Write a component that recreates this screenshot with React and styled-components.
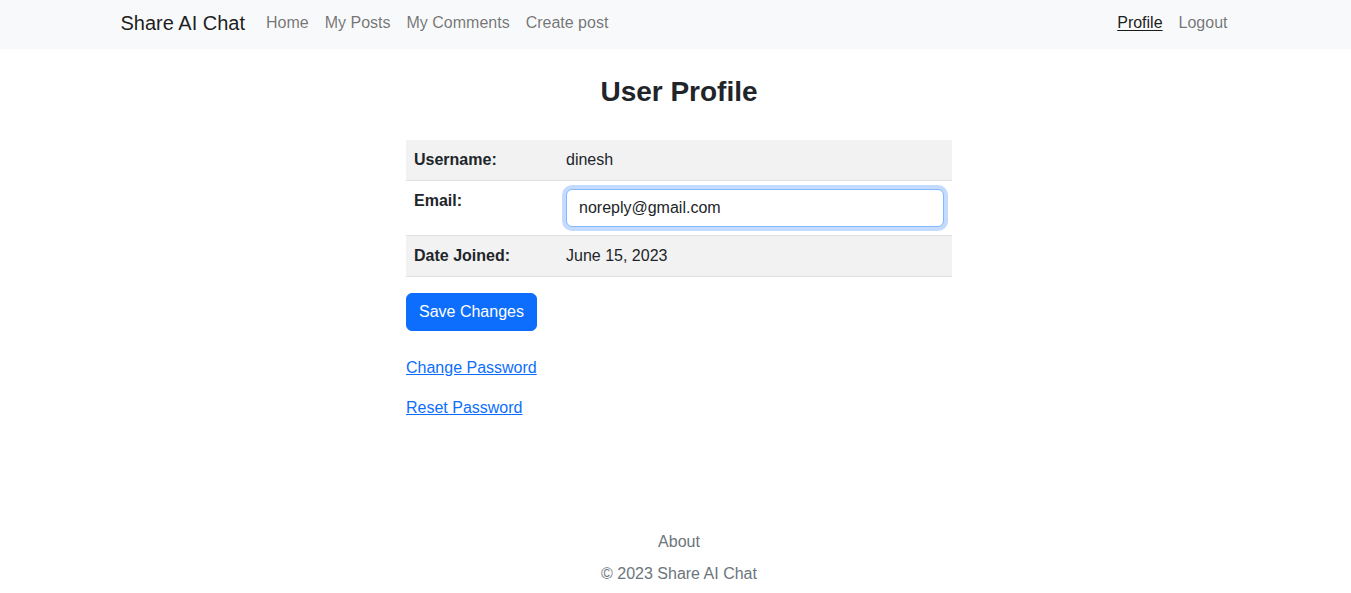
import React from 'react'
import styled, { createGlobalStyle } from 'styled-components'

const GlobalStyle = createGlobalStyle`
  * { box-sizing: border-box; }
  body {
    margin: 0;
    font-family: "Liberation Sans", Arial, sans-serif;
    font-size: 16px;
    line-height: 1.5;
    color: #212529;
    background: #fff;
  }
`

const Page = styled.div`
  min-height: 100vh;
  display: flex;
  flex-direction: column;
`

const Navbar = styled.nav`
  background: #f8f9fa;
  height: 49px;
  padding-bottom: 4px;
  display: flex;
  align-items: center;
`

const NavContainer = styled.div`
  width: 1140px;
  margin: 0 auto;
  padding: 0 10px 0 15px;
  display: flex;
  align-items: center;
`

const Brand = styled.a`
  font-size: 20px;
  color: rgba(0, 0, 0, 0.9);
  text-decoration: none;
  margin-right: 13px;
  line-height: 30px;
`

const NavList = styled.div`
  display: flex;
  align-items: center;
  margin-left: ${(p) => (p.$right ? 'auto' : '0')};
`

const NavLink = styled.a`
  padding: 8px 8px;
  color: ${(p) => (p.$active ? 'rgba(0, 0, 0, 0.9)' : 'rgba(0, 0, 0, 0.55)')};
  text-decoration: ${(p) => (p.$active ? 'underline' : 'none')};
  text-underline-offset: 2px;
`

const Main = styled.main`
  width: 553px;
  margin: 0 auto;
  padding: 26px 0 0 7px;
`

const Title = styled.h3`
  margin: 0 0 31px;
  text-align: center;
  font-size: 28px;
  font-weight: 700;
  line-height: 1.2;
`

const Table = styled.table`
  width: 100%;
  border-collapse: collapse;
  margin-bottom: 16px;
  vertical-align: top;
`

const Row = styled.tr`
  background: ${(p) => (p.$striped ? '#f2f2f2' : '#fff')};
  border-bottom: 1px solid #dee2e6;
`

const Label = styled.th`
  width: 152px;
  padding: 8px;
  text-align: left;
  font-weight: 700;
  vertical-align: top;
`

const Value = styled.td`
  padding: 8px;
  vertical-align: top;
`

const Input = styled.input`
  display: block;
  width: 100%;
  height: 38px;
  padding: 6px 12px;
  font: inherit;
  color: #212529;
  border: 1px solid #86b7fe;
  border-radius: 6px;
  outline: none;
  box-shadow: 0 0 0 4px rgba(13, 110, 253, 0.25);
`

const Button = styled.button`
  display: block;
  height: 38px;
  padding: 6px 12px;
  font: inherit;
  color: #fff;
  background: #0d6efd;
  border: 1px solid #0d6efd;
  border-radius: 6px;
  margin-bottom: 25px;
`

const LinkPara = styled.p`
  margin: 0 0 16px;
`

const TextLink = styled.a`
  color: #0d6efd;
  text-decoration: underline;
`

const Footer = styled.footer`
  margin-top: auto;
  padding: 0 0 7px 7px;
  text-align: center;
  color: #6c757d;
`

const FooterLink = styled.a`
  display: inline-block;
  padding: 8px;
  color: #6c757d;
  text-decoration: none;
`

const Copy = styled.p`
  margin: 0;
`

export default function App() {
  return (
    <Page>
      <GlobalStyle />
      <Navbar>
        <NavContainer>
          <Brand href="#">Share AI Chat</Brand>
          <NavList>
            <NavLink href="#">Home</NavLink>
            <NavLink href="#">My Posts</NavLink>
            <NavLink href="#">My Comments</NavLink>
            <NavLink href="#">Create post</NavLink>
          </NavList>
          <NavList $right>
            <NavLink href="#" $active>Profile</NavLink>
            <NavLink href="#">Logout</NavLink>
          </NavList>
        </NavContainer>
      </Navbar>

      <Main>
        <Title>User Profile</Title>
        <Table>
          <tbody>
            <Row $striped>
              <Label>Username:</Label>
              <Value>dinesh</Value>
            </Row>
            <Row>
              <Label>Email:</Label>
              <Value>
                <Input type="email" defaultValue="noreply@gmail.com" />
              </Value>
            </Row>
            <Row $striped>
              <Label>Date Joined:</Label>
              <Value>June 15, 2023</Value>
            </Row>
          </tbody>
        </Table>
        <Button type="button">Save Changes</Button>
        <LinkPara>
          <TextLink href="#">Change Password</TextLink>
        </LinkPara>
        <LinkPara>
          <TextLink href="#">Reset Password</TextLink>
        </LinkPara>
      </Main>

      <Footer>
        <FooterLink href="#">About</FooterLink>
        <Copy>© 2023 Share AI Chat</Copy>
      </Footer>
    </Page>
  )
}
